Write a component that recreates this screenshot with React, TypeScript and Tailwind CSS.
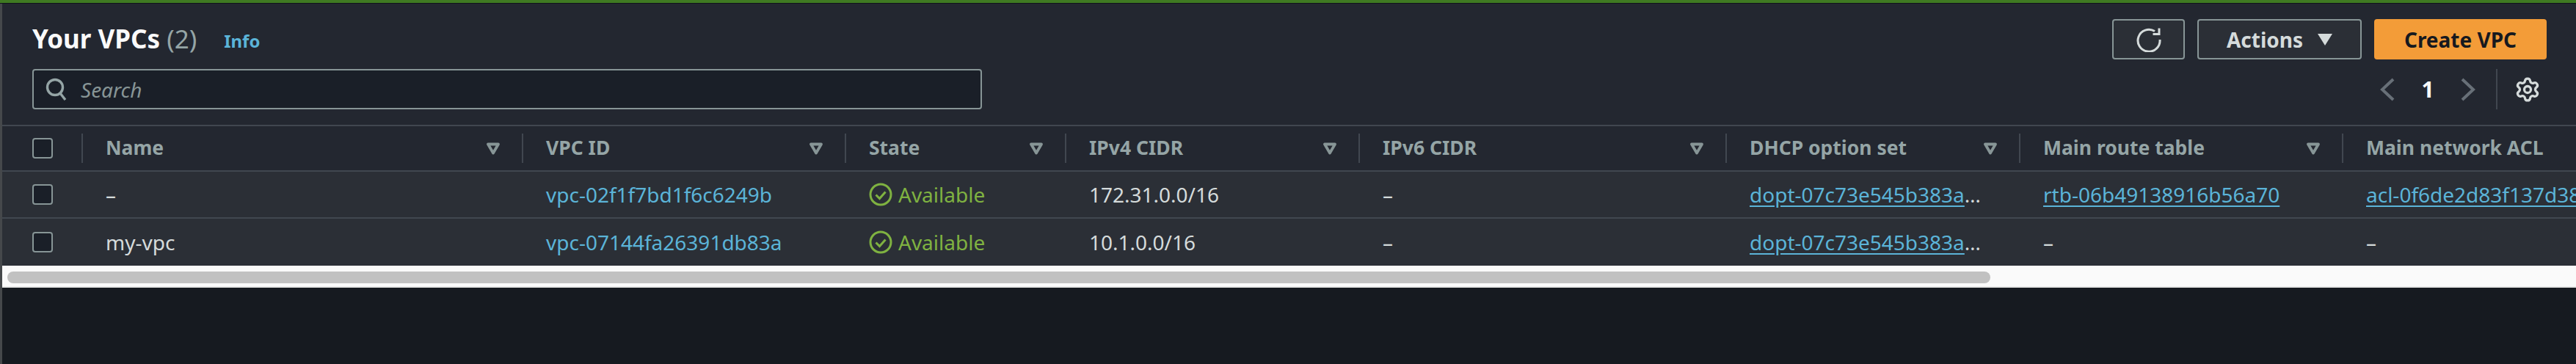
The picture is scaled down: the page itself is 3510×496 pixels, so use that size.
import { Settings } from "lucide-react";

// Column widths follow the separators in the table header
const columns = [
  { label: "Name", width: "w-[600px]" },
  { label: "VPC ID", width: "w-[440px]" },
  { label: "State", width: "w-[300px]" },
  { label: "IPv4 CIDR", width: "w-[400px]" },
  { label: "IPv6 CIDR", width: "w-[500px]" },
  { label: "DHCP option set", width: "w-[400px]" },
  { label: "Main route table", width: "w-[440px]" },
  { label: "Main network ACL", width: "w-[315px]" },
];

const rows = [
  {
    name: "–",
    vpc: "vpc-02f1f7bd1f6c6249b",
    cidr: "172.31.0.0/16",
    route: "rtb-06b49138916b56a70",
    acl: "acl-0f6de2d83f137d38c",
    tall: false,
  },
  {
    name: "my-vpc",
    vpc: "vpc-07144fa26391db83a",
    cidr: "10.1.0.0/16",
    route: "",
    acl: "",
    tall: true,
  },
];

function Checkbox() {
  return <div className="w-[28px] h-[28px] rounded-[4px] border-2 border-[#879596] bg-[#1a1f28]" />;
}

function FilterIcon() {
  return (
    <svg width="20" height="17" viewBox="0 0 20 17" className="shrink-0">
      <path d="M3 2.500h14l-7 12z" fill="none" stroke="#879596" strokeWidth="3.800" strokeLinejoin="round" />
    </svg>
  );
}

function RefreshIcon() {
  return (
    <svg width="34" height="34" viewBox="0 0 34 34" fill="none" stroke="#d5dbdb" strokeWidth="3">
      <path d="M25 5.500A15 15 0 1 0 32 17" />
      <path d="M31 1.500V9.500H22.500" />
    </svg>
  );
}

function Link({ children, underline }: { children: string; underline?: boolean }) {
  return <a className={underline ? "text-[#5bb4d8] underline underline-offset-[4px]" : "text-[#5bb4d8]"}>{children}</a>;
}

function Cell({ width, children }: { width: string; children: React.ReactNode }) {
  return <div className={`${width} shrink-0 pl-[33px] pr-[44px] truncate`}>{children}</div>;
}

export default function App() {
  return (
    <div className="w-[3510px] h-[496px] overflow-hidden bg-[#161a20] flex flex-col font-['Noto_Sans','Open_Sans',sans-serif]">
      <div className="h-[4px] shrink-0 bg-[#3f7a22]" />
      <div className="h-[1px] shrink-0 bg-[#10131a]" />
      <div className="flex flex-1 min-h-0">
        <div className="w-[3px] shrink-0 bg-[#45484b]" />
        <div className="flex-1 min-w-0 flex flex-col">
          {/* Cabecera */}
          <div className="h-[165px] shrink-0 bg-[#232730] flex justify-between pl-[41px] pr-[40px] pt-[21px]">
            <div className="flex flex-col gap-[13px]">
              <div className="h-[55px] flex items-center">
                <h1 className="text-[35px] font-bold text-[#fafafa]">
                  Your VPCs <span className="font-normal text-[#95a5a6]">(2)</span>
                </h1>
                <a className="ml-[37px] mt-[4px] text-[24px] font-bold text-[#5bb4d8]">Info</a>
              </div>
              <div className="w-[1294px] h-[55px] flex items-center gap-[18px] px-[16px] rounded-[4px] border-2 border-[#879596] bg-[#1a1f28]">
                <svg width="30" height="32" viewBox="0 0 30 32" fill="none" stroke="#95a5a6" strokeWidth="3.400">
                  <circle cx="13" cy="13" r="10.500" />
                  <path d="M20 21l7 9" />
                </svg>
                <span className="text-[28px] italic text-[#879596]">Search</span>
              </div>
            </div>
            <div className="flex flex-col items-end gap-[13px]">
              <div className="flex gap-[17px] h-[55px]">
                <button className="w-[99px] flex items-center justify-center rounded-[4px] border-2 border-[#879596] bg-[#2b2f36]">
                  <RefreshIcon />
                </button>
                <button className="w-[224px] flex items-center justify-center gap-[20px] rounded-[4px] border-2 border-[#879596] bg-[#2b2f36] text-[28px] font-bold text-[#d5dbdb]">
                  Actions
                  <svg width="20" height="16" viewBox="0 0 20 16">
                    <path d="M0 0h20l-10 16z" fill="#d5dbdb" />
                  </svg>
                </button>
                <button className="w-[235px] flex items-center justify-center rounded-[4px] bg-[#f39c38] text-[28px] font-bold text-[#16191f]">
                  Create VPC
                </button>
              </div>
              <div className="flex items-center h-[55px]">
                <svg width="20" height="32" viewBox="0 0 20 32" fill="none" stroke="#687078" strokeWidth="4">
                  <path d="M18 2L3 16l15 14" />
                </svg>
                <span className="w-[90px] text-center text-[30px] font-bold text-[#fafafa]">1</span>
                <svg width="20" height="32" viewBox="0 0 20 32" fill="none" stroke="#687078" strokeWidth="4">
                  <path d="M2 2l15 14L2 30" />
                </svg>
                <div className="w-[2px] h-full ml-[28px] bg-[#414750]" />
                <div className="w-[67px] flex justify-end pr-[8px]">
                  <Settings size={36} strokeWidth={2.200} className="text-[#d5dbdb]" />
                </div>
              </div>
            </div>
          </div>

          {/* Encabezado de tabla */}
          <div className="h-[2px] shrink-0 bg-[#414750]" />
          <div className="h-[60px] shrink-0 bg-[#232730] flex items-center text-[26.5px] font-bold text-[#95a5a6]">
            <div className="w-[108px] shrink-0 pl-[41px]">
              <Checkbox />
            </div>
            {columns.map((col) => (
              <div key={col.label} className={`${col.width} shrink-0 h-[40px] flex items-center justify-between border-l-2 border-[#414750] pl-[31px] pr-[29px] whitespace-nowrap`}>
                <span>{col.label}</span>
                {col.label !== "Main network ACL" && <FilterIcon />}
              </div>
            ))}
          </div>
          <div className="h-[2px] shrink-0 bg-[#414750]" />

          {/* Filas */}
          {rows.map((row) => (
            <div key={row.vpc}>
              <div className={`${row.tall ? "h-[64px]" : "h-[62px]"} bg-[#2b2f36] flex items-center text-[28px] text-[#d5dbdb] whitespace-nowrap`}>
                <div className="w-[108px] shrink-0 pl-[41px]">
                  <Checkbox />
                </div>
                <Cell width="w-[600px]">{row.name}</Cell>
                <Cell width="w-[440px]"><Link>{row.vpc}</Link></Cell>
                <div className="w-[300px] shrink-0 pl-[33px] flex items-center gap-[8px] text-[#7fb241]">
                  <svg width="32" height="32" viewBox="0 0 32 32" fill="none" stroke="#7fb241" strokeWidth="3">
                    <circle cx="16" cy="16" r="14" />
                    <path d="M9.500 16.500l5 5 8-9" />
                  </svg>
                  Available
                </div>
                <Cell width="w-[400px]">{row.cidr}</Cell>
                <Cell width="w-[500px]">–</Cell>
                <Cell width="w-[400px]"><Link underline>dopt-07c73e545b383a4f1d</Link></Cell>
                <Cell width="w-[440px]">{row.route ? <Link underline>{row.route}</Link> : "–"}</Cell>
                {/* La última columna se corta en el borde de la página */}
                <div className="shrink-0 pl-[33px]">{row.acl ? <Link underline>{row.acl}</Link> : "–"}</div>
              </div>
              {!row.tall && <div className="h-[2px] bg-[#414750]" />}
            </div>
          ))}

          {/* Barra de scroll */}
          <div className="h-[30px] shrink-0 bg-[#fafafa] border-b-2 border-[#e8e8e8] pt-[8px] pl-[7px]">
            <div className="w-[2702px] h-[16px] rounded-full bg-[#c1c1c1]" />
          </div>
        </div>
      </div>
    </div>
  );
}
